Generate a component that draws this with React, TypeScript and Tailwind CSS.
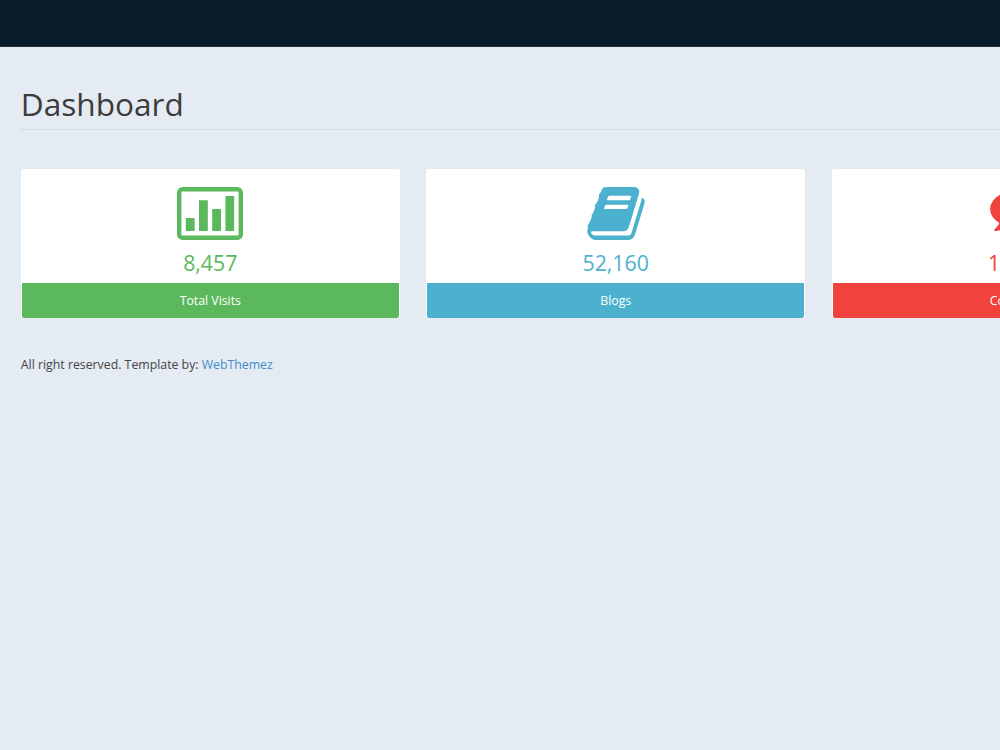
import type { ReactNode } from 'react';

interface PanelProps {
  icon: ReactNode;
  value: string;
  label: string;
  text: string;
  fill: string;
}

function BarChartIcon() {
  return (
    <svg className="h-[53px] w-[66px]" viewBox="0 0 1920 1536" fill="currentColor">
      <path
        fillRule="evenodd"
        d="M160 0h1600q66 0 113 47t47 113v1216q0 66-47 113t-113 47h-1600q-66 0-113-47t-47-113v-1216q0-66 47-113t113-47zM160 128q-32 0-32 32v1216q0 32 32 32h1600q32 0 32-32v-1216q0-32-32-32z"
      />
      <path d="M256 896h256v384h-256zM640 384h256v896h-256zM1024 640h256v640h-256zM1408 256h256v1024h-256z" />
    </svg>
  );
}

function BookIcon() {
  return (
    <svg className="h-[53px] w-[58px]" viewBox="64 128 1664 1536" fill="currentColor">
      <path
        transform="translate(64 0)"
        d="M1639 478q40 57 18 129l-275 906q-19 64-76.5 107.500t-122.500 43.500h-923q-77 0-148.500-53.500t-99.500-131.500q-24-67-2-127 0-4 3-27t4-37q1-8-3-21.500t-3-19.500q2-11 8-21t16.500-23.500 16.500-23.500q23-38 45-91.500t30-91.500q3-10 .5-30t-.5-28q3-11 17-28t17-23q21-36 42-92t25-90q1-9-2.500-32t.5-28q4-13 22-30.500t22-22.500q19-26 42.500-84.500t27.500-96.500q1-8-3-25.500t-2-26.500q2-8 9-18t18-23 17-21q8-12 16.500-30.500t15-35 16-36 19.500-32 26.500-23.500 36-11.500 47.500 5.500l-1 3q38-9 51-9h761q74 0 114 56t18 130l-274 906q-36 119-71.500 153.500t-128.500 34.500h-869q-27 0-38 15-11 16-1 43 24 70 144 70h923q29 0 56-15.500t35-41.500l300-987q7-22 5-57 38 15 59 43zm-1064 2q-4 13 2 22.500t20 9.500h608q13 0 25.500-9.500t16.500-22.500l21-64q4-13-2-22.500t-20-9.500h-608q-13 0-25.500 9.500t-16.500 22.500zm-83 256q-4 13 2 22.500t20 9.500h608q13 0 25.500-9.500t16.500-22.500l21-64q4-13-2-22.500t-20-9.500h-608q-13 0-25.500 9.500t-16.500 22.500z"
      />
    </svg>
  );
}

function CommentsIcon() {
  return (
    <svg className="h-[53px] w-[62px]" viewBox="0 128 1792 1536" fill="currentColor">
      <path d="M1408 768q0 139-94 257t-256.500 186.500-353.500 68.500q-86 0-176-16-124 88-278 128-36 9-86 16h-3q-11 0-20.500-8t-11.500-21q-1-3-1-6.500t.5-6.500 2-6l2.500-5 3.500-5.500 4-5 4.500-5 4-4.500q5-6 23-25t26-29.500 22.500-29 25-38.500 20.500-44q-124-72-195-177t-71-224q0-139 94-257t256.500-186.500 353.500-68.500 353.500 68.500 256.500 186.500 94 257zm384 256q0 120-71 224.500t-195 176.500q10 24 20.500 44t25 38.500 22.500 29 26 29.500 23 25q1 1 4 4.500t4.500 5 4 5 3.500 5.500l2.500 5 2 6 .5 6.500-1 6.500q-3 14-13 22t-22 7q-50-7-86-16-154-40-278-128-90 16-176 16-271 0-472-132 58 4 88 4 161 0 309-45t264-129q125-92 192-212t67-254q0-77-23-152 129 71 204 178t75 230z" />
    </svg>
  );
}

function Panel({ icon, value, label, text, fill }: PanelProps) {
  return (
    <div className="flex h-[149px] w-[379px] shrink-0 flex-col overflow-hidden rounded-[3px] bg-white">
      <div className={`flex h-[114px] flex-col items-center pt-[18px] ${text}`}>
        {icon}
        <h3 className="mt-[9px] text-[21.3px] leading-[28px]">{value}</h3>
      </div>
      <div className={`mx-px flex h-[35px] items-center justify-center rounded-b-[2px] pt-[2px] text-[12.3px] text-white ${fill}`}>
        {label}
      </div>
    </div>
  );
}

export default function App() {
  return (
    <div className="h-[750px] w-[1000px] overflow-hidden bg-[#e4ebf3] font-['Open_Sans',sans-serif] text-[#3c3c3c]">
      <header className="h-[47px] border-b border-[#26323f] bg-[#091a2a]" />
      <main className="pl-[20.8px]">
        <h1 className="h-[83px] border-b border-[#d0dce9] pt-[35px] text-[31.6px] leading-[44px]">Dashboard</h1>
        <div className="mt-[39px] flex gap-[26.4px]">
          <Panel icon={<BarChartIcon />} value="8,457" label="Total Visits" text="text-[#5cb85c]" fill="bg-[#5cb85c]" />
          <Panel icon={<BookIcon />} value="52,160" label="Blogs" text="text-[#4cb1cf]" fill="bg-[#4cb1cf]" />
          <Panel icon={<CommentsIcon />} value="15,823" label="Comments" text="text-[#f0433d]" fill="bg-[#f0433d]" />
        </div>
        <footer className="mt-[37px] text-[12.3px] leading-[20px] text-[#444]">
          All right reserved. Template by: <a className="text-[#428bca]">WebThemez</a>
        </footer>
      </main>
    </div>
  );
}
